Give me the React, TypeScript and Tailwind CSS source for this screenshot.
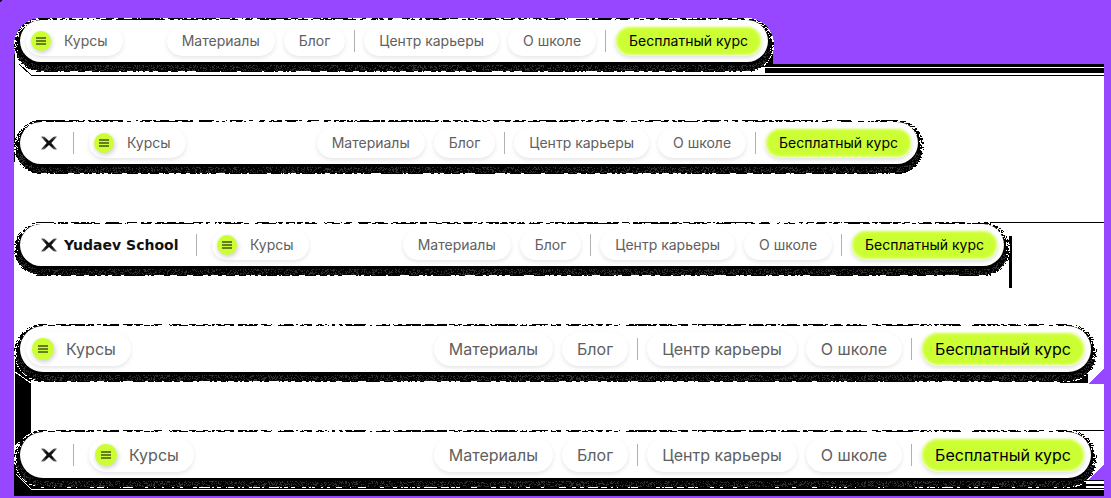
import { useMemo } from "react";

type BarProps = { width: number; max: string; logo?: "mark" | "full"; large?: boolean };

function random(seed: number) {
  let s = seed;
  return () => {
    s = (s * 1664525 + 1013904223) >>> 0;
    return s / 4294967296;
  };
}

/* Signed distance from a point to a pill of the given box. */
function pillDistance(x: number, y: number, w: number, h: number) {
  const r = h / 2;
  const cx = Math.min(Math.max(x, r), w - r);
  return Math.hypot(x - cx, y - r) - r;
}

function GrainShadow({ width, height }: { width: number; height: number }) {
  const paths = useMemo(() => {
    const rand = random(width * 31 + height);
    let black = "";
    let white = "";
    let grey = "";
    const w = width + 12;
    const h = height + 12;
    for (let y = 0; y < h; y++) {
      let start = -1;
      let run = 0;
      let on = false;
      for (let x = 0; x <= w; x++) {
        let dark = false;
        if (x < w) {
          const d = pillDistance(x + 0.5, y + 0.5, w, h);
          const n = rand();
          if (run <= 0) {
            on = rand() > 0.4;
            run = 1 + Math.floor(rand() * 4);
          }
          run--;
          if (d < 0) {
            const low = y > h * 0.6;
            const edge = low ? d > -1.2 : d > -1.9;
            dark = !edge || on;
            if (!dark) white += `M${x} ${y}h1v1h-1z`;
            else if (low && d < -1.2 && d > -7 && n < 0.3) grey += `M${x} ${y}h1v1h-1z`;
            else if (d > -4 && (x < 20 || x > w - 20) && n < 0.2) white += `M${x} ${y}h1v1h-1z`;
          }
        }
        if (dark && start < 0) start = x;
        if (!dark && start >= 0) {
          black += `M${start} ${y}h${x - start}v1H${start}z`;
          start = -1;
        }
      }
    }
    return { black, white, grey, w, h };
  }, [width, height]);
  return (
    <svg
      aria-hidden="true"
      width={paths.w}
      height={paths.h}
      shapeRendering="crispEdges"
      className="pointer-events-none absolute -top-[2px] -left-[6px] max-w-none"
    >
      <path d={paths.black} fill="#000" />
      <path d={paths.grey} fill="#303030" />
      <path d={paths.white} fill="#fff" />
    </svg>
  );
}

function Backdrop() {
  return (
    <svg
      aria-hidden="true"
      width="1111"
      height="498"
      shapeRendering="crispEdges"
      className="pointer-events-none absolute top-0 left-0 max-w-none"
    >
      <path d="M0 0h2v1h-1v1h-1z" fill="#000" />
      <path d="M14 54h20v10h1070v432H14z" fill="#fff" />
      <path d="M14 54h1v108h-1zM760 53h13v11h331v3H760z" fill="#000" />
      <path d="M765 68h339v5H765zM31 75h1073v1H31z" fill="#000" />
      <path d="M19 64l12 11" fill="none" stroke="#000" />
      <path d="M990 222h114v1H990zM1009 236h3v52h-3z" fill="#000" />
      <path d="M990 276l19-16v-20h-10z" fill="#000" />
      <path d="M15 360h6l10 13v60l-16 12zM1060 372h28v11h-28z" fill="#000" />
      <path d="M15 372l16 11" fill="none" stroke="#fff" />
      <path d="M1104 368v16h-16zM1104 464v16h-16z" fill="#9747ff" />
      <path d="M1060 430h44v1h-44zM14 455h6l12 24h1054v17H14zM1086 490h18v6h-18z" fill="#000" />
      <path d="M1084 480h20v1h-20zM1080 484h24v2h-24zM1076 488h28v1h-28z" fill="#000" />
      <path d="M31 489h1073v1H31z" fill="#fff" />
      <path d="M16 474l15 15" fill="none" stroke="#fff" />
    </svg>
  );
}

function Mark({ id }: { id: string }) {
  return (
    <svg aria-hidden="true" width="16" height="14" viewBox="0 0 16 14" className="shrink-0">
      <defs>
        <radialGradient id={id} cx="8" cy="7" r="10" gradientUnits="userSpaceOnUse">
          <stop offset="0.35" stopColor="#111" />
          <stop offset="1" stopColor="#666" />
        </radialGradient>
      </defs>
      <path
        d="M0 .8C2 .2 3.400 .6 4.600 1.800L8 4.900L11.400 1.800C12.600 .6 14 .2 16 .8L10.300 7L16 13.200C14 13.800 12.600 13.400 11.400 12.200L8 9.100L4.600 12.200C3.400 13.400 2 13.800 0 13.200L5.700 7Z"
        fill={`url(#${id})`}
      />
    </svg>
  );
}

function Divider() {
  return <span aria-hidden="true" className="h-[22px] w-px shrink-0 bg-[#b0b0b0]" />;
}

function NavLink({ label, large }: { label: string; large?: boolean }) {
  return (
    <a
      href="#"
      className={`flex items-center rounded-full bg-white px-[15px] whitespace-nowrap text-[#606060] shadow-[0_2px_4px_rgba(0,0,0,0.1)] ${large ? "h-[34px]" : "h-[30px]"}`}
    >
      {label}
    </a>
  );
}

function Bar({ width, max, logo, large }: BarProps) {
  return (
    <div className={`relative w-full ${max}`}>
      <GrainShadow width={width} height={large ? 46 : 42} />
      <nav
        aria-label="Yudaev School"
        className={`relative flex items-center rounded-full bg-white pr-[6px] ${large ? "h-[46px] text-base" : "h-[42px] text-sm"} ${logo ? "pl-[21px]" : "pl-[6px]"}`}
      >
        {logo && (
          <>
            <a href="#" aria-label="Yudaev School" className="flex items-center gap-[7px]">
              <Mark id={`mark-${width}`} />
              {logo === "full" && (
                <span className="w-[116px] font-['DejaVu_Sans',sans-serif] text-sm font-bold whitespace-nowrap text-[#111]">
                  Yudaev School
                </span>
              )}
            </a>
            <span className="mr-[15px] ml-4 flex">
              <Divider />
            </span>
          </>
        )}
        <button
          type="button"
          className={`flex items-center rounded-full bg-white pr-[15px] shadow-[0_2px_4px_rgba(0,0,0,0.1)] ${large ? "h-[34px] gap-3 pl-[6px]" : "h-[30px] gap-[13px] pl-[5px]"}`}
        >
          <span
            className={`flex items-center justify-center rounded-full bg-[#ccff33] shadow-[1px_2px_5px_rgba(0,0,0,0.2)] ${large ? "size-[22px]" : "size-5"}`}
          >
            <svg aria-hidden="true" width="10" height="8" viewBox="0 0 10 8" shapeRendering="crispEdges">
              <path d="M0 0h10v2H0zM0 3h10v2H0zM0 6h10v2H0z" fill="#667f1a" />
            </svg>
          </span>
          <span className="text-[#606060]">Курсы</span>
        </button>
        <div className="ml-auto flex items-center gap-[9px]">
          <NavLink label="Материалы" large={large} />
          <NavLink label="Блог" large={large} />
          <Divider />
          <NavLink label="Центр карьеры" large={large} />
          <NavLink label="О школе" large={large} />
          <Divider />
          <a
            href="#"
            className={`flex items-center rounded-full bg-[#ccff33] px-[14px] whitespace-nowrap text-black shadow-[inset_0_0_3px_1px_#fff,0_2px_4px_rgba(0,0,0,0.12)] ${large ? "h-[34px]" : "h-[30px]"}`}
          >
            Бесплатный курс
          </a>
        </div>
      </nav>
    </div>
  );
}

const bars: BarProps[] = [
  { width: 748, max: "max-w-[748px]" },
  { width: 898, max: "max-w-[898px]", logo: "mark" },
  { width: 984, max: "max-w-[984px]", logo: "full" },
  { width: 1071, max: "max-w-[1071px]", large: true },
  { width: 1071, max: "max-w-[1071px]", logo: "mark", large: true },
];

export default function App() {
  return (
    <main className="relative overflow-hidden bg-[#9747ff] p-5 font-['Inter',sans-serif]">
      <Backdrop />
      <div className="flex flex-col gap-[60px]">
        {bars.map((bar, i) => (
          <Bar key={i} {...bar} />
        ))}
      </div>
    </main>
  );
}
